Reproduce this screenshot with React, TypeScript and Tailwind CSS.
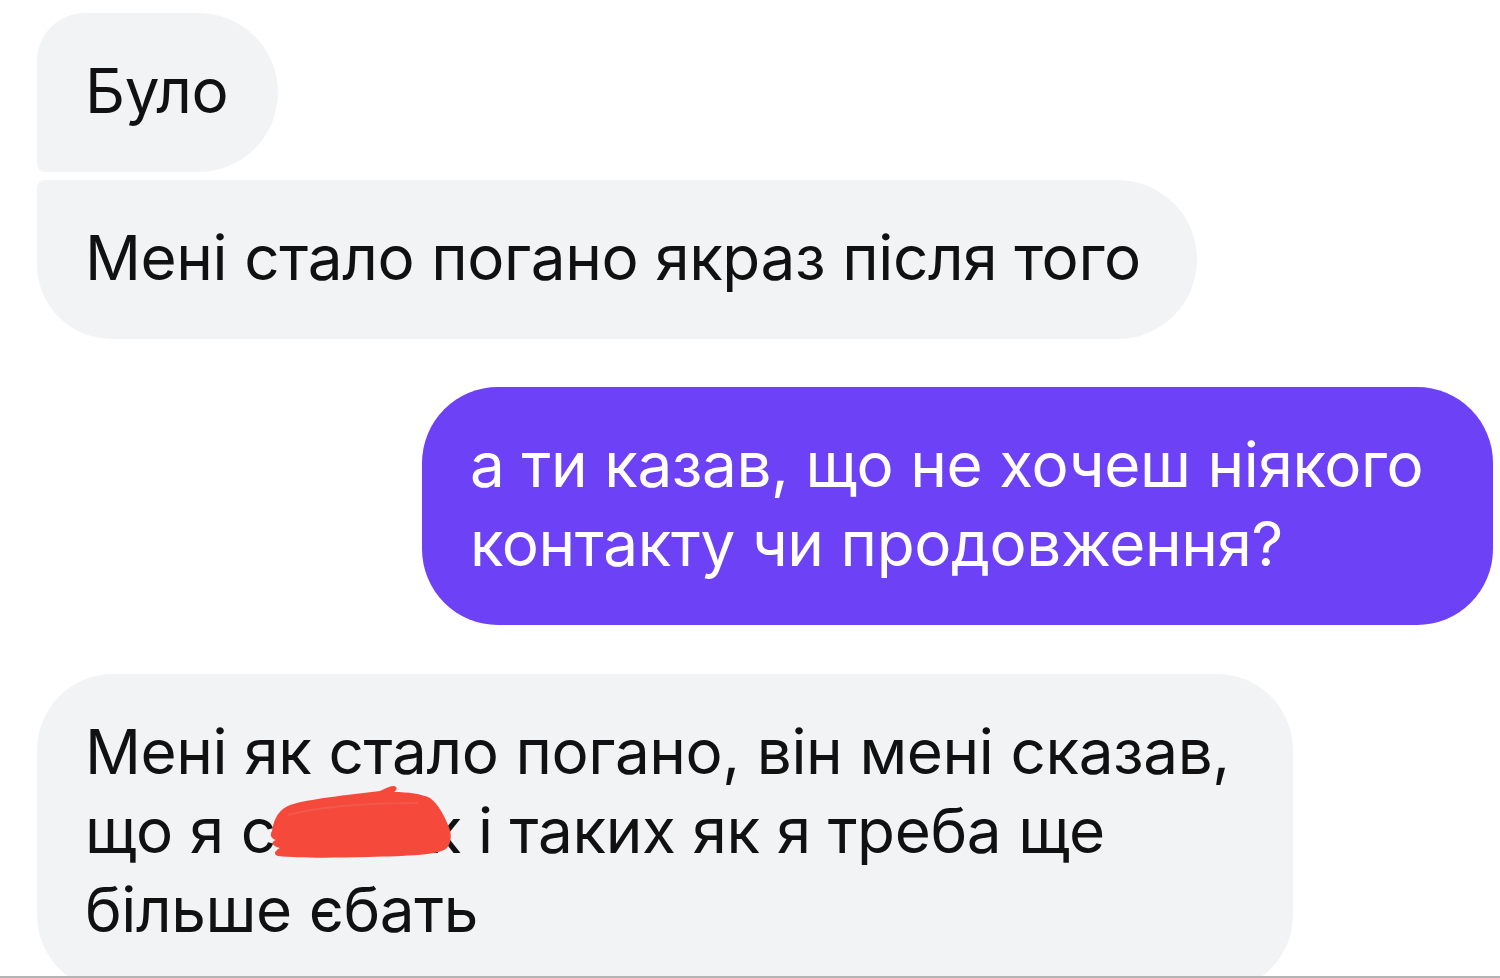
import React from "react";

function Scribble() {
  return (
    <svg
      className="absolute left-[-8px] top-[-6px] pointer-events-none"
      width="186"
      height="76"
      viewBox="0 0 186 76"
    >
      <path
        d="M4 46 C 6 32, 12 24, 22 20 C 40 14, 80 10, 112 6 C 118 3, 122 1, 126 1 C 130 2, 129 5, 126 7 C 140 7, 154 9, 162 13 C 170 19, 176 30, 180 40 C 184 48, 184 58, 178 64 C 168 70, 140 71, 100 72 C 60 73, 30 73, 10 71 C 4 69, 8 65, 12 63 C 4 61, 2 57, 8 55 C 2 53, 2 49, 4 46 Z"
        fill="#f5493b"
      />
      <path
        d="M20 30 C 50 22, 100 18, 150 18"
        stroke="#f06a5e"
        strokeWidth="2"
        fill="none"
        opacity="0.5"
      />
    </svg>
  );
}

export default function App() {
  const font = { fontFamily: "Inter, 'Noto Sans', 'Liberation Sans', sans-serif" };
  return (
    <div className="w-[1500px] h-[978px] bg-white flex flex-col overflow-hidden" style={font}>
      <div className="h-[976px] overflow-hidden flex flex-col pl-[37px] pt-[13px] text-[62px] leading-[79px] text-[#111111] tracking-[-0.4px]">
        <div className="self-start bg-[#f2f3f5] rounded-tl-[48px] rounded-bl-[8px] rounded-r-[80px] pl-[48px] pr-[50px] pt-[38px] pb-[42px]">
          Було
        </div>
        <div className="mt-[8px] self-start bg-[#f2f3f5] rounded-tl-[8px] rounded-bl-[75px] rounded-r-[80px] pl-[48px] pr-[56px] pt-[38px] pb-[42px] whitespace-nowrap">
          Мені стало погано якраз після того
        </div>
        <div className="mt-[48px] self-end mr-[7px] w-[1071px] bg-[#6d41f6] text-white rounded-[76px] pl-[48px] pr-[40px] pt-[38px] pb-[42px] whitespace-nowrap">
          а ти казав, що не хочеш ніякого
          <br />
          контакту чи продовження?
        </div>
        <div className="mt-[49px] self-start w-[1256px] bg-[#f2f3f5] rounded-[76px] pl-[48px] pr-[40px] pt-[38px] pb-[42px] whitespace-nowrap">
          Мені як стало погано, він мені сказав,
          <br />
          що я с
          <span className="relative inline-block w-[152px] align-baseline">
            <span className="invisible">у</span>
            <Scribble />
          </span>
          к і таких як я треба ще
          <br />
          більше єбать
        </div>
      </div>
      <div className="h-[2px] bg-[#b4b4b4]" />
    </div>
  );
}
